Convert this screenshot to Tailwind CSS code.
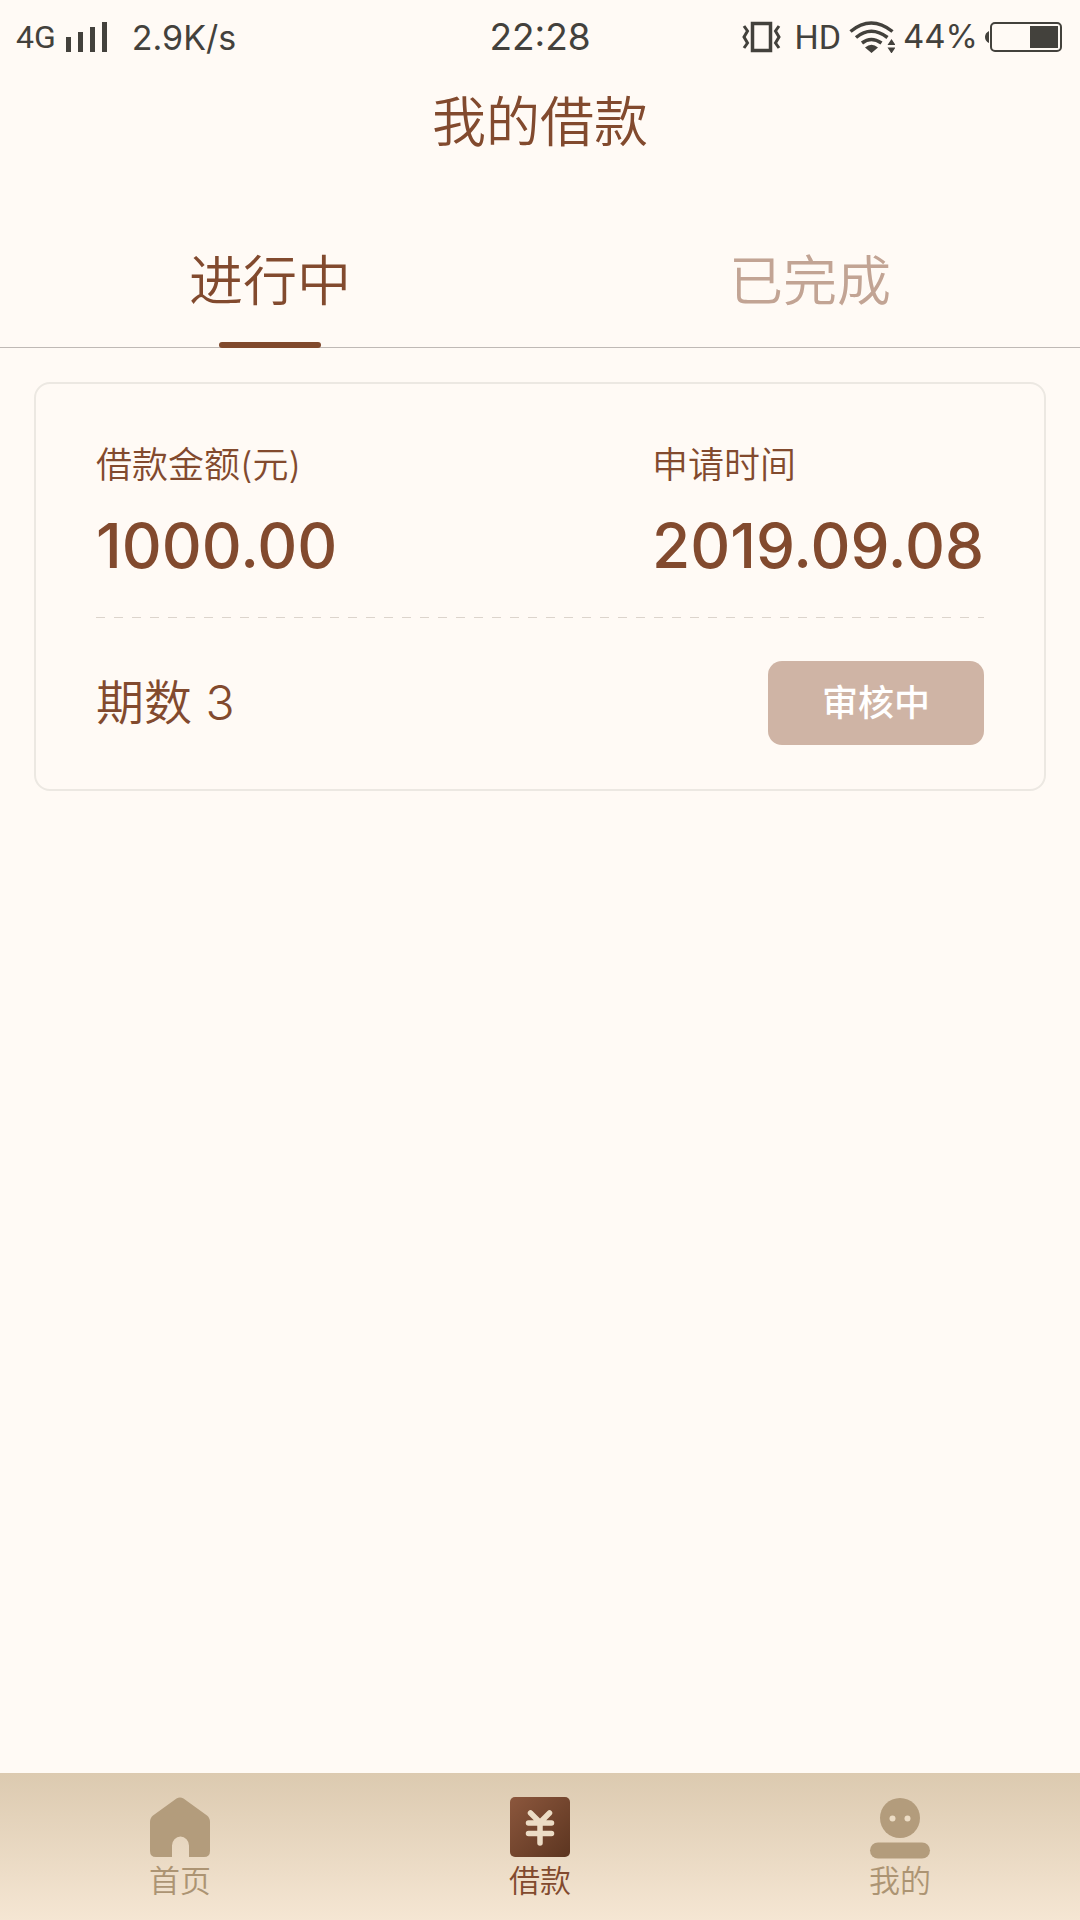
<!DOCTYPE html>
<html lang="zh-CN">
<head>
<meta charset="utf-8">
<meta name="viewport" content="width=device-width, initial-scale=1">
<title>我的借款</title>
<script src="https://cdn.jsdelivr.net/npm/@tailwindcss/browser@4"></script>
</head>
<body class="flex min-h-screen flex-col bg-[#fffaf5] font-['Inter','Noto_Sans_CJK_SC',sans-serif] font-[350] text-[#824a2e]">

<!-- Status bar -->
<div class="grid h-[74px] grid-cols-[1fr_auto_1fr] items-center px-4 font-normal text-[#43413c]">
  <div class="flex items-center">
    <span class="font-[Roboto] text-[32px]">4G</span>
    <svg class="ml-2.5 h-[30px] w-[42px]" viewBox="0 0 42 30" fill="currentColor" aria-hidden="true"><path d="M0 15h5v15H0zM12 10h5v20h-5zM24 5h5v25h-5zM36 0h5v30h-5z"/></svg>
    <span class="ml-6 text-[34px]">2.9K/s</span>
  </div>
  <span class="text-[37px]">22:28</span>
  <div class="flex items-center justify-end">
    <svg class="h-[32px] w-[40px]" viewBox="0 0 40 32" fill="none" stroke="currentColor" aria-hidden="true"><path stroke-width="3.500" d="M10.500 2.500h18v27h-18z"/><path stroke-width="3" d="M2 5l3.500 5L2 16l3.500 6L2 27M37 5l-3.500 5 3.500 6-3.500 6L37 27"/></svg>
    <span class="ml-3 font-[Roboto] text-[34px]">HD</span>
    <svg class="ml-2 h-[32px] w-[46px]" viewBox="0 0 46 32" fill="none" stroke="currentColor" stroke-width="3.500" aria-hidden="true"><path d="M1.500 10.500Q22 -6.500 43.500 10.500M7 16.500Q22 4 38.500 16.500M13 22Q22 15 32.500 22"/><path fill="currentColor" stroke="none" d="M16 26.500q6.500-5.500 13 0L22.500 32zM38.500 24l4-6 4 6zM38.500 26.500h8l-4 6z"/></svg>
    <span class="ml-2 text-[33px]">44%</span>
    <svg class="ml-1.5 h-[30px] w-[80px]" viewBox="0 0 80 30" aria-hidden="true"><path fill="currentColor" d="M5 9v12Q1 19 1 15t4-6zM46 4h28v22H46z"/><rect x="7" y="1" width="70" height="28" rx="4" fill="none" stroke="currentColor" stroke-width="2"/></svg>
  </div>
</div>

<header class="flex h-[98px] items-center justify-center">
  <h1 class="text-[54px] leading-[64px] font-[350]">我的借款</h1>
</header>

<!-- Loan status tabs -->
<div role="tablist" class="grid grid-cols-2 border-b border-[#bfb9b5]">
  <button role="tab" aria-selected="true" class="-mb-px flex flex-col items-center pt-[78px]">
    <span class="text-[54px] leading-[64px]">进行中</span>
    <span class="mt-[28px] h-[6px] w-[102px] rounded-sm bg-[#80492c]"></span>
  </button>
  <button role="tab" aria-selected="false" class="flex flex-col items-center pt-[78px] text-[#c2a494]">
    <span class="text-[54px] leading-[64px]">已完成</span>
  </button>
</div>

<main class="grow px-[34px] pt-[34px]">
  <article class="rounded-[16px] border-2 border-[#ece8e2] px-[60px] pt-[56px] pb-[44px]">
    <dl class="flex justify-between">
      <div>
        <dt class="text-[36px] leading-[50px]">借款金额(元)</dt>
        <dd class="mt-4 text-[62px] leading-[80px] font-medium">1000.00</dd>
      </div>
      <div>
        <dt class="text-[36px] leading-[50px]">申请时间</dt>
        <dd class="mt-4 text-[62px] leading-[80px] font-medium">2019.09.08</dd>
      </div>
    </dl>
    <div class="mt-[31px] h-px bg-[repeating-linear-gradient(90deg,#dcd4cc_0_9px,transparent_9px_18px)]"></div>
    <div class="mt-[43px] flex items-center justify-between">
      <p class="text-[48px] leading-[64px]">期数 3</p>
      <button class="h-[84px] w-[216px] rounded-[14px] bg-[#cfb4a5] text-[36px] font-medium text-white">审核中</button>
    </div>
  </article>
</main>

<!-- Bottom navigation -->
<nav class="grid h-[147px] grid-cols-3 bg-linear-to-b from-[#dccab0] to-[#f5e6d3] text-[31px] leading-[48px] text-[#ac9473]">
  <a href="#" class="flex flex-col items-center pt-6">
    <svg class="size-[60px]" viewBox="0 0 60 60" fill="#b39c7c" aria-hidden="true"><path d="M26.500 1.500Q30 -.500 33.500 1.500L57 18.500Q60 21 60 25V54Q60 60 54 60H39V48.500a8.500 9 0 0 0-17 0V60H6Q0 60 0 54V25Q0 21 3 18.500Z"/></svg>
    <span>首页</span>
  </a>
  <a href="#" aria-current="page" class="flex flex-col items-center pt-6 text-[#824a2e]">
    <svg class="size-[60px]" viewBox="0 0 60 60" aria-hidden="true"><defs><linearGradient id="tile" x1="0" y1="0" x2="1" y2="1"><stop offset="0" stop-color="#8c573d"/><stop offset="1" stop-color="#5c3520"/></linearGradient></defs><rect width="60" height="60" rx="5" fill="url(#tile)"/><path d="M20.500 16L30 25.500 39.500 16M18.500 26h23M18.500 36.500h23M30 26v20" fill="none" stroke="#ecdcc5" stroke-width="5.500" stroke-linecap="round" stroke-linejoin="round"/></svg>
    <span>借款</span>
  </a>
  <a href="#" class="flex flex-col items-center pt-6">
    <svg class="-mb-[2px] size-[62px]" viewBox="-1 0 62 62" fill="#b39c7c" aria-hidden="true"><circle cx="30" cy="21" r="20"/><rect y="45.500" width="60" height="16" rx="8"/><g fill="#ecdcc5"><circle cx="22.500" cy="21.500" r="3"/><circle cx="37.500" cy="21.500" r="3"/></g></svg>
    <span>我的</span>
  </a>
</nav>
</body>
</html>
